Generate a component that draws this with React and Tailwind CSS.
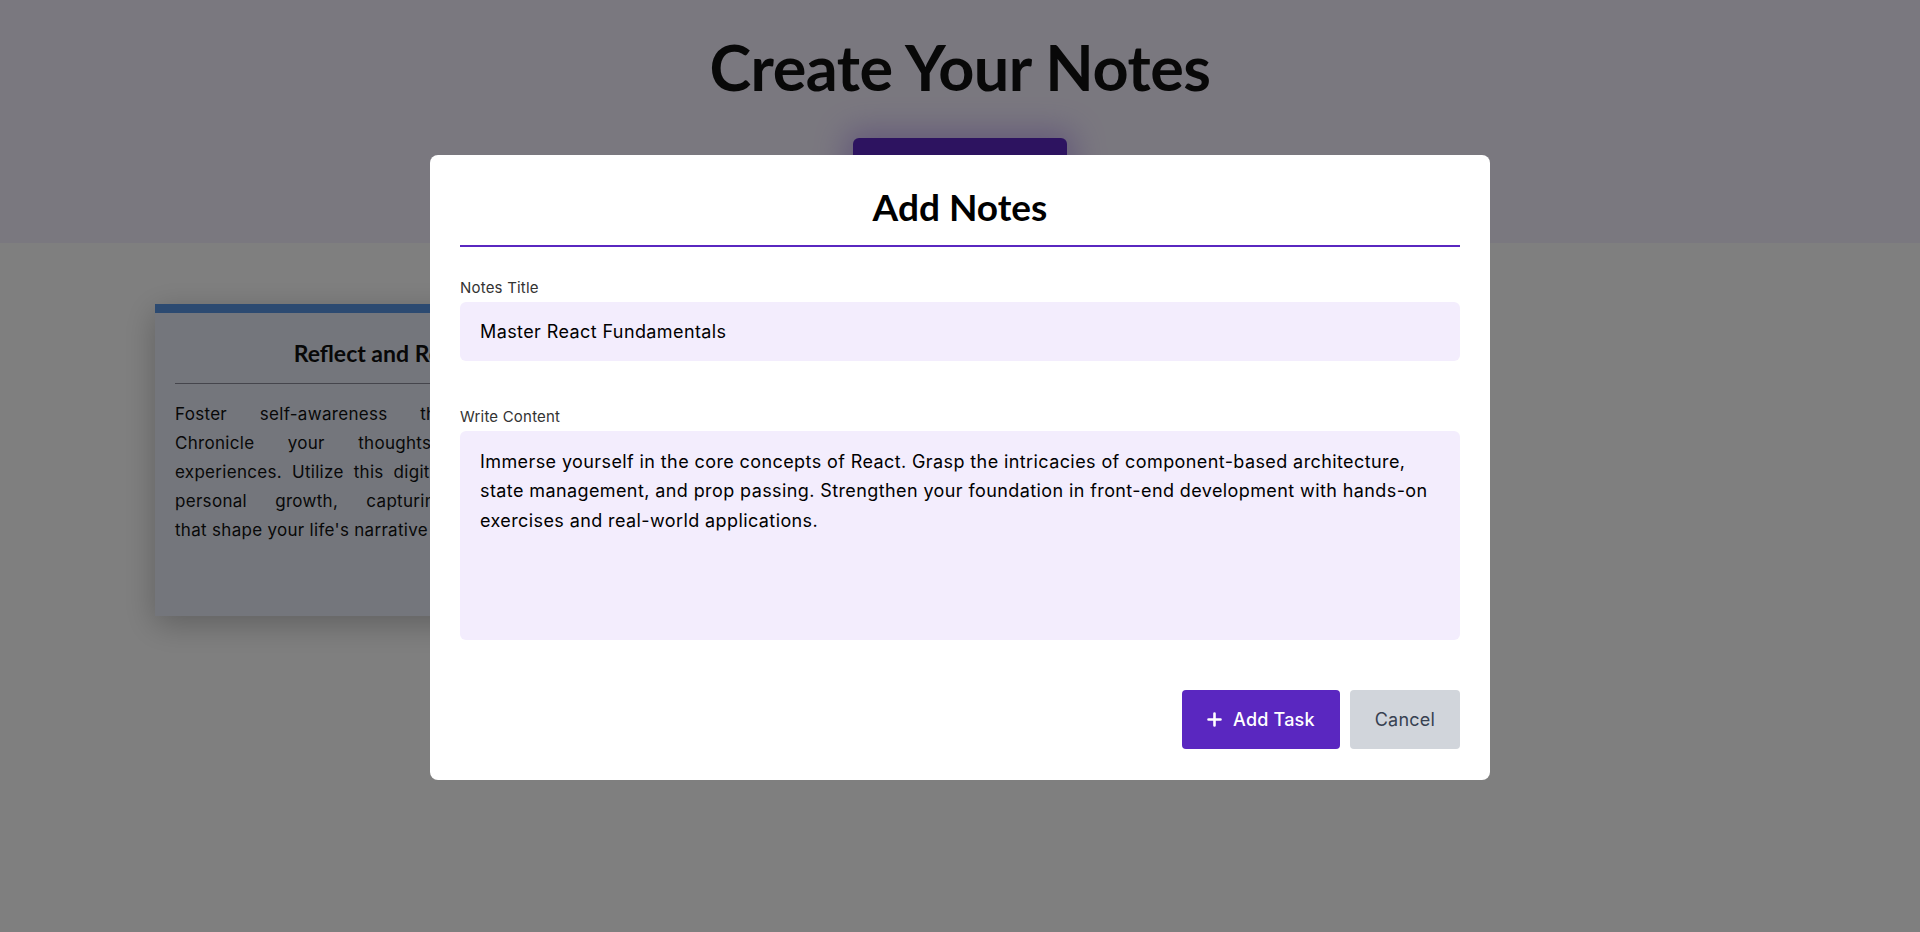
import React from "react";

function PlusIcon() {
  return (
    <svg width="15" height="15" viewBox="0 0 15 15" fill="none" stroke="currentColor" strokeWidth="2.6" strokeLinecap="round">
      <path d="M7.5 1.5v12M1.5 7.5h12" />
    </svg>
  );
}

export default function App() {
  return (
    <div className="relative min-h-screen bg-white font-['Inter',sans-serif] text-[#111]">
      <header className="flex h-[243px] flex-col items-center bg-[#f5f0ff] pt-[35px]">
        <h1 className="font-['Lato',sans-serif] text-[63px] font-bold leading-[64px] tracking-[-0.5px] text-[#111]">Create Your Notes</h1>
        <button className="mt-[39px] flex h-[59px] w-[214px] items-center justify-center gap-2 rounded-md bg-[#5a27c0] text-lg font-medium text-white shadow-[0_0_30px_8px_rgba(120,70,220,0.35)]">
          <PlusIcon />
          Add Notes
        </button>
      </header>

      <main className="px-[155px] pt-[61px]">
        <div className="h-[312px] w-[470px] overflow-hidden bg-[#e8edf8] shadow-[0_8px_30px_rgba(0,0,0,0.25)]">
          <div className="h-[9px] bg-[#5894e2]" />
          <div className="px-5 pt-[24px]">
            <h3 className="text-center font-['Lato',sans-serif] text-[23px] font-bold leading-8 text-[#111]">Reflect and Record</h3>
            <hr className="mt-[14px] border-t border-[#8a8a99]" />
            <div className="mt-4 text-[17px] leading-[29px] tracking-[0.3px] text-[#111]">
              <p className="text-justify [text-align-last:justify]">Foster self-awareness through journaling.</p>
              <p className="text-justify [text-align-last:justify]">Chronicle your thoughts, feelings, and</p>
              <p className="text-justify [text-align-last:justify]">experiences. Utilize this digital diary as a space</p>
              <p className="text-justify [text-align-last:justify]">personal growth, capturing the moments</p>
              <p>that shape your life's narrative and memories.</p>
            </div>
          </div>
        </div>
      </main>

      <div className="fixed inset-0 flex items-start justify-center bg-black/50 pt-[155px]">
        <div className="w-[1060px] rounded-lg bg-white px-[30px] pb-[31px] pt-[32px]">
          <h2 className="border-b-2 border-[#5a27c0] pb-[18px] text-center font-['Lato',sans-serif] text-[37px] font-bold leading-10 text-black">Add Notes</h2>

          <div className="mt-[29px]">
            <label className="block text-[15px] leading-6 tracking-[0.2px] text-[#333]">Notes Title</label>
            <div className="mt-0.5 rounded-md bg-[#f3edfd] px-5 py-4 text-lg leading-[27px] tracking-[0.4px] text-black">Master React Fundamentals</div>
          </div>

          <div className="mt-[44px]">
            <label className="block text-[15px] leading-6 tracking-[0.2px] text-[#333]">Write Content</label>
            <div className="mt-0.5 h-[209px] rounded-md bg-[#f3edfd] px-5 py-4 text-lg leading-relaxed tracking-[0.4px] text-black">
              Immerse yourself in the core concepts of React. Grasp the intricacies of component-based architecture, state management, and prop passing. Strengthen your foundation in front-end development with hands-on exercises and real-world applications.
            </div>
          </div>

          <div className="mt-[50px] flex justify-end gap-[10px]">
            <button className="flex h-[59px] items-center gap-[11px] rounded bg-[#5a27c0] px-[25px] text-lg font-medium tracking-[0.2px] text-white">
              <PlusIcon />
              Add Task
            </button>
            <button className="flex h-[59px] items-center rounded bg-[#d1d5db] px-[25px] text-lg tracking-[0.2px] text-[#374151]">Cancel</button>
          </div>
        </div>
      </div>
    </div>
  );
}
